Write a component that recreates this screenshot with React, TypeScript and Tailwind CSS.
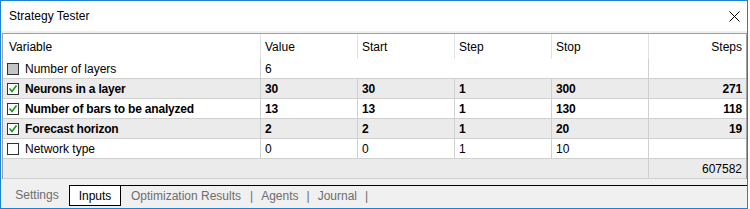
type Row = {
  name: string;
  value: string;
  start: string;
  step: string;
  stop: string;
  steps: string;
  state: "disabled" | "checked" | "unchecked";
};

const rows: Row[] = [
  { name: "Number of layers", value: "6", start: "", step: "", stop: "", steps: "", state: "disabled" },
  { name: "Neurons in a layer", value: "30", start: "30", step: "1", stop: "300", steps: "271", state: "checked" },
  { name: "Number of bars to be analyzed", value: "13", start: "13", step: "1", stop: "130", steps: "118", state: "checked" },
  { name: "Forecast horizon", value: "2", start: "2", step: "1", stop: "20", steps: "19", state: "checked" },
  { name: "Network type", value: "0", start: "0", step: "1", stop: "10", steps: "", state: "unchecked" },
];

const cols = "grid grid-cols-[257px_97px_97px_97px_97px_1fr]";

function Checkbox({ state }: { state: Row["state"] }) {
  if (state === "disabled") {
    return <div className="w-[12px] h-[12px] border border-[#333] bg-[#c4c4c4] shrink-0" />;
  }
  return (
    <div className="w-[12px] h-[12px] border border-[#333] bg-white shrink-0 relative">
      {state === "checked" && (
        <svg width="10" height="10" viewBox="0 0 10 10" className="absolute left-0 top-0">
          <path d="M1.5 4.5 L4 7.5 L8.5 1.5" fill="none" stroke="#119911" strokeWidth="1.6" />
        </svg>
      )}
    </div>
  );
}

function DataRow({ row, shaded }: { row: Row; shaded: boolean }) {
  const bold = row.state === "checked";
  const line = row.state === "disabled" ? "" : "border-l border-[#d0d0d0]";
  return (
    <div
      className={`${cols} h-[20px] border-b border-[#d0d0d0] ${shaded ? "bg-[#ebebeb]" : "bg-white"} ${bold ? "font-bold tracking-[-0.2px]" : ""}`}
    >
      <div className="flex items-center gap-[6px] pl-[4px]">
        <Checkbox state={row.state} />
        <span>{row.name}</span>
      </div>
      <div className="flex items-center pl-[4px] border-l border-[#d0d0d0]">{row.value}</div>
      <div className={`flex items-center pl-[4px] ${line}`}>{row.start}</div>
      <div className={`flex items-center pl-[4px] ${line}`}>{row.step}</div>
      <div className={`flex items-center pl-[4px] ${line}`}>{row.stop}</div>
      <div className="flex items-center justify-end pr-[4px] border-l border-[#d0d0d0]">{row.steps}</div>
    </div>
  );
}

export default function App() {
  return (
    <div className="w-[750px] h-[209px] bg-white text-[12px] text-black" style={{ fontFamily: '"Liberation Sans", Arial, sans-serif' }}>
      <div className="w-[748px] h-[209px] border border-[#1883d7] flex flex-col">
        {/* title bar */}
        <div className="h-[30px] flex items-center justify-between pl-[8px] pr-[7px] bg-white shrink-0">
          <span>Strategy Tester</span>
          <svg width="11" height="11" viewBox="0 0 11 11">
            <path d="M0.5 0.5 L10.5 10.5 M10.5 0.5 L0.5 10.5" stroke="#000" strokeWidth="1" />
          </svg>
        </div>

        <div className="flex-1 bg-[#f0f0f0] pt-[2px] pl-[1px] flex flex-col">
          {/* table */}
          <div className="border-t border-l border-r border-[#a0a0a0] bg-white leading-none">
            <div className={`${cols} h-[25px] bg-white`}>
              <div className="flex items-center pl-[6px]">Variable</div>
              <div className="flex items-center pl-[4px] border-l border-[#e2e2e2]">Value</div>
              <div className="flex items-center pl-[4px] border-l border-[#e2e2e2]">Start</div>
              <div className="flex items-center pl-[4px] border-l border-[#e2e2e2]">Step</div>
              <div className="flex items-center pl-[4px] border-l border-[#e2e2e2]">Stop</div>
              <div className="flex items-center justify-end pr-[4px] border-l border-[#e2e2e2]">Steps</div>
            </div>
            {rows.map((r, i) => (
              <DataRow key={r.name} row={r} shaded={i % 2 === 1} />
            ))}
            <div className={`${cols} h-[20px] border-b border-[#d0d0d0] bg-[#ebebeb]`}>
              <div className="col-span-5" />
              <div className="flex items-center justify-end pr-[4px] border-l border-[#d0d0d0]">607582</div>
            </div>
          </div>

          {/* tabs */}
          <div className="mt-[6px] flex h-[23px] leading-none">
            <div className="w-[67px] h-[20px] flex items-center justify-center pl-[3px] text-[#6d6d6d]">Settings</div>
            <div className="flex-1 border-t border-black flex items-start">
              <div className="w-[52px] h-[20px] bg-white border-l border-r border-b border-black flex items-center justify-center">
                Inputs
              </div>
              <div className="h-[19px] flex items-center text-[#6d6d6d]">
                <span className="pl-[10px] pr-[9px]">Optimization Results</span>
                <span>|</span>
                <span className="px-[8px]">Agents</span>
                <span>|</span>
                <span className="px-[8px]">Journal</span>
                <span>|</span>
              </div>
            </div>
          </div>
        </div>
      </div>
    </div>
  );
}
